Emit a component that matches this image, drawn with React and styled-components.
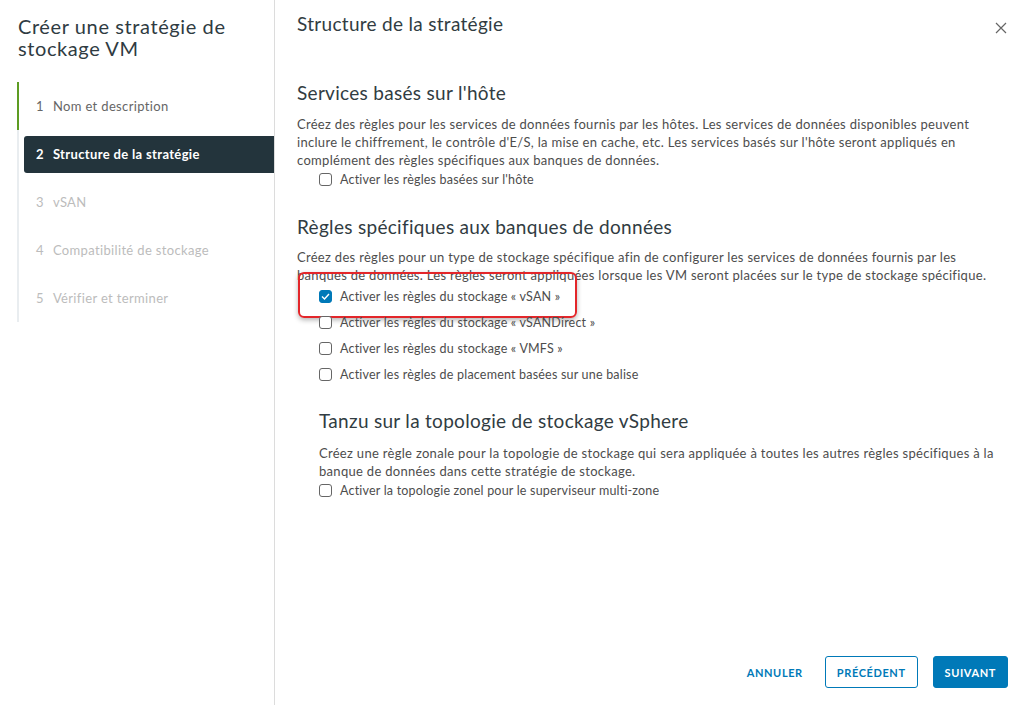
import React, { useState } from 'react'
import styled, { createGlobalStyle } from 'styled-components'

const GlobalStyle = createGlobalStyle`
    body {
        margin: 0;
        font-family: Lato, "Open Sans", "Liberation Sans", sans-serif;
        background: #fff;
    }
`

const Shell = styled.div`
    display: flex;
    height: 705px;
    width: 1026px;
    overflow: hidden;
`

const Sidebar = styled.aside`
    width: 275px;
    border-right: 1px solid #dcdcdc;
    padding: 15px 0 0 18px;
    box-sizing: border-box;
    flex-shrink: 0;
`

const WizardTitle = styled.h1`
    margin: 0;
    font-size: 20px;
    line-height: 22px;
    letter-spacing: 0.6px;
    font-weight: 400;
    color: #2f3b42;
`

const Steps = styled.ol`
    list-style: none;
    margin: 23px 0 0 -1px;
    padding: 0;
    border-left: 2px solid #e9edf0;
`

const Step = styled.li`
    height: 48px;
    display: flex;
    align-items: center;
    margin-left: ${({ done }) => done ? '-2px' : '0'};
    border-left: ${({ done }) => done ? '2px solid #5d9c23' : 'none'};
`

const StepBox = styled.div`
    flex: 1;
    display: flex;
    align-items: center;
    gap: 9px;
    height: 37px;
    margin-left: 5px;
    padding-left: 12px;
    border-radius: 3px 0 0 3px;
    font-size: 13px;
    letter-spacing: 0.35px;
    background: ${({ active }) => active ? '#23343c' : 'transparent'};
    color: ${({ active, muted }) => active ? '#fff' : muted ? '#bcbcbc' : '#666'};
    font-weight: ${({ active }) => active ? 700 : 400};
`

const Main = styled.main`
    flex: 1;
    display: flex;
    flex-direction: column;
    padding: 12px 18px 17px 22px;
`

const Header = styled.div`
    display: flex;
    justify-content: space-between;
    align-items: center;
`

const PageTitle = styled.h2`
    margin: 0;
    font-size: 19px;
    line-height: 24px;
    letter-spacing: 0.3px;
    font-weight: 400;
    color: #313c42;
`

const Close = styled.button`
    border: none;
    background: none;
    padding: 0;
    width: 14px;
    height: 14px;
    margin-top: 10px;
    cursor: pointer;
    color: #666;
`

const Content = styled.div`
    flex: 1;
    padding-top: 45px;
`

const Section = styled.section`
    margin-left: ${({ indent }) => indent ? '22px' : '0'};
    margin-top: ${({ top }) => top || 0}px;
`

const SectionTitle = styled.h3`
    margin: 0 0 ${({ gap }) => gap || 10}px;
    font-size: 19px;
    line-height: 24px;
    letter-spacing: 0.3px;
    font-weight: 400;
    color: #313c42;
`

const Text = styled.p`
    margin: 0;
    font-size: 13px;
    line-height: 18px;
    letter-spacing: 0.3px;
    color: #4d4d4d;
    max-width: 700px;
`

const Checks = styled.div`
    display: flex;
    flex-direction: column;
    gap: 8px;
    margin-top: ${({ top }) => top || 1}px;
    margin-left: ${({ indent }) => indent ? '22px' : '0'};
`

const Row = styled.label`
    position: relative;
    display: flex;
    align-items: center;
    gap: 8px;
    height: 18px;
    font-size: 12.5px;
    letter-spacing: 0.2px;
    color: #4d4d4d;
    cursor: pointer;
`

const Box = styled.span`
    width: 13px;
    height: 13px;
    box-sizing: border-box;
    border-radius: 3px;
    border: 1px solid ${({ checked }) => checked ? '#0079b8' : '#666'};
    background: ${({ checked }) => checked ? '#0079b8' : '#fff'};
    display: flex;
    align-items: center;
    justify-content: center;
    flex-shrink: 0;
`

const Highlight = styled.span`
    position: absolute;
    left: -21px;
    top: -15px;
    width: 279px;
    height: 46px;
    box-sizing: border-box;
    border: 2px solid #e3262a;
    border-radius: 6px;
    box-shadow: 0 2px 5px rgba(0, 0, 0, 0.3);
    pointer-events: none;
`

const Footer = styled.div`
    display: flex;
    justify-content: flex-end;
    align-items: center;
    gap: 15px;
`

const Button = styled.button`
    height: 32px;
    padding: 0 ${({ link }) => link ? '2px' : '11px'};
    margin-right: ${({ link }) => link ? '4px' : '0'};
    border-radius: 3px;
    font-family: inherit;
    font-size: 11px;
    font-weight: 700;
    letter-spacing: 0.6px;
    cursor: pointer;
    border: 1px solid ${({ link }) => link ? 'transparent' : '#0079b8'};
    background: ${({ primary }) => primary ? '#0079b8' : '#fff'};
    color: ${({ primary }) => primary ? '#fff' : '#0079b8'};
`

function Checkbox({ label, checked, onChange, highlight })
{
    return (
        <Row onClick={onChange}>
            <Box checked={checked}>
                {checked && (
                    <svg width="9" height="7" viewBox="0 0 9 7">
                        <path d="M1 3.5 L3.5 6 L8 1" fill="none" stroke="#fff" strokeWidth="1.4" />
                    </svg>
                )}
            </Box>
            {label}
            {highlight && <Highlight />}
        </Row>
    )
}

const steps = [
    { n: 1, label: 'Nom et description', state: 'done' },
    { n: 2, label: 'Structure de la stratégie', state: 'active' },
    { n: 3, label: 'vSAN', state: 'muted' },
    { n: 4, label: 'Compatibilité de stockage', state: 'muted' },
    { n: 5, label: 'Vérifier et terminer', state: 'muted' },
]

export default function App()
{
    const [checks, setChecks] = useState({ host: false, vsan: true, direct: false, vmfs: false, tag: false, zone: false })
    const toggle = (k) => () => setChecks(c => ({ ...c, [k]: !c[k] }))

    return (
        <Shell>
            <GlobalStyle />
            <Sidebar>
                <WizardTitle>Créer une stratégie de<br />stockage VM</WizardTitle>
                <Steps>
                    {steps.map(s => (
                        <Step key={s.n} done={s.state === 'done'}>
                            <StepBox active={s.state === 'active'} muted={s.state === 'muted'}>
                                <span>{s.n}</span>
                                <span>{s.label}</span>
                            </StepBox>
                        </Step>
                    ))}
                </Steps>
            </Sidebar>
            <Main>
                <Header>
                    <PageTitle>Structure de la stratégie</PageTitle>
                    <Close aria-label="Fermer">
                        <svg width="12" height="12" viewBox="0 0 12 12">
                            <path d="M1 1 L11 11 M11 1 L1 11" stroke="#666" strokeWidth="1.2" />
                        </svg>
                    </Close>
                </Header>
                <Content>
                    <Section>
                        <SectionTitle>Services basés sur l'hôte</SectionTitle>
                        <Text>
                            Créez des règles pour les services de données fournis par les hôtes. Les services de données disponibles peuvent inclure le chiffrement, le contrôle d'E/S, la mise en cache, etc. Les services basés sur l'hôte seront appliqués en complément des règles spécifiques aux banques de données.
                        </Text>
                        <Checks indent>
                            <Checkbox label="Activer les règles basées sur l'hôte" checked={checks.host} onChange={toggle('host')} />
                        </Checks>
                    </Section>
                    <Section top={27}>
                        <SectionTitle gap={9}>Règles spécifiques aux banques de données</SectionTitle>
                        <Text>
                            Créez des règles pour un type de stockage spécifique afin de configurer les services de données fournis par les banques de données. Les règles seront appliquées lorsque les VM seront placées sur le type de stockage spécifique.
                        </Text>
                        <Checks indent top={3}>
                            <Checkbox label="Activer les règles du stockage « vSAN »" checked={checks.vsan} onChange={toggle('vsan')} highlight />
                            <Checkbox label="Activer les règles du stockage « vSANDirect »" checked={checks.direct} onChange={toggle('direct')} />
                            <Checkbox label="Activer les règles du stockage « VMFS »" checked={checks.vmfs} onChange={toggle('vmfs')} />
                            <Checkbox label="Activer les règles de placement basées sur une balise" checked={checks.tag} onChange={toggle('tag')} />
                        </Checks>
                    </Section>
                    <Section indent top={26}>
                        <SectionTitle gap={11}>Tanzu sur la topologie de stockage vSphere</SectionTitle>
                        <Text>
                            Créez une règle zonale pour la topologie de stockage qui sera appliquée à toutes les autres règles spécifiques à la banque de données dans cette stratégie de stockage.
                        </Text>
                        <Checks>
                            <Checkbox label="Activer la topologie zonel pour le superviseur multi-zone" checked={checks.zone} onChange={toggle('zone')} />
                        </Checks>
                    </Section>
                </Content>
                <Footer>
                    <Button link>ANNULER</Button>
                    <Button>PRÉCÉDENT</Button>
                    <Button primary>SUIVANT</Button>
                </Footer>
            </Main>
        </Shell>
    )
}
